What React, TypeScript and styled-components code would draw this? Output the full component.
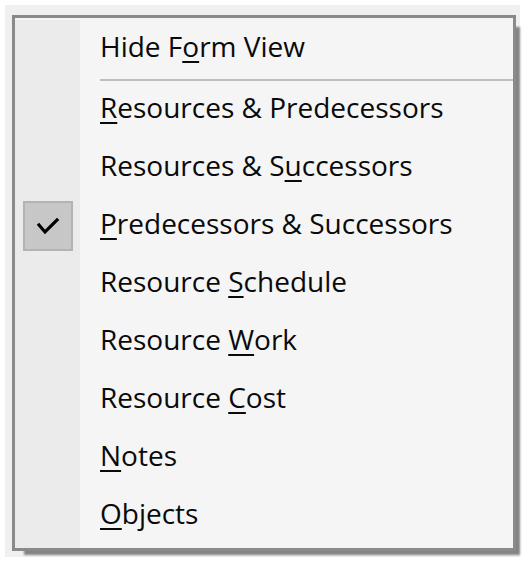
import React from "react";
import styled, { createGlobalStyle } from "styled-components";

const Global = createGlobalStyle`
  html, body { margin: 0; padding: 0; background: #ffffff; }
  body { font-family: "Open Sans", "Noto Sans", sans-serif; }
`;

const Frame = styled.div`
  margin: 5px 0 0 5px;
  width: 515px;
  height: 552px;
  background: #f0f0f0;
  padding: 10px 0 0 7px;
  box-sizing: border-box;
`;

const Menu = styled.div`
  width: 504px;
  height: 536px;
  box-sizing: border-box;
  border: 3px solid #8a8a8a;
  background: #f5f5f5;
  padding-top: 2px;
  box-shadow: 8px 8px 2px -4px rgba(0, 0, 0, 0.45);
  display: flex;
  flex-direction: column;
`;

const Row = styled.div`
  display: grid;
  grid-template-columns: 65px 1fr;
  height: 58px;
`;

const Gutter = styled.div`
  background: #ebebeb;
  display: flex;
  align-items: center;
  justify-content: flex-start;
  padding-left: 8px;
`;

const GutterFill = styled.div`
  flex: 1;
  width: 65px;
  background: #ebebeb;
`;

const Label = styled.span`
  padding-left: 20px;
  font-family: "Open Sans", "Noto Sans", sans-serif;
  font-size: 28px;
  line-height: 52px;
  padding-bottom: 6px;
  color: #0a0a0a;
  white-space: nowrap;
`;

const Key = styled.span`
  text-decoration: underline;
  text-decoration-thickness: 2px;
  text-underline-offset: 4px;
`;

const SeparatorRow = styled.div`
  display: grid;
  grid-template-columns: 65px 1fr;
  height: 3px;
`;

const SeparatorLine = styled.div`
  margin-left: 20px;
  margin-top: 1px;
  height: 2px;
  background: #bdbdbd;
`;

const CheckBox = styled.div`
  width: 50px;
  height: 50px;
  box-sizing: border-box;
  border: 2px solid #b3b3b3;
  background: #c7c7c7;
  display: flex;
  align-items: center;
  justify-content: center;
`;

type Item = { pre: string; key: string; post: string; checked?: boolean };

const items: Item[] = [
  { pre: "", key: "R", post: "esources & Predecessors" },
  { pre: "Resources & S", key: "u", post: "ccessors" },
  { pre: "", key: "P", post: "redecessors & Successors", checked: true },
  { pre: "Resource ", key: "S", post: "chedule" },
  { pre: "Resource ", key: "W", post: "ork" },
  { pre: "Resource ", key: "C", post: "ost" },
  { pre: "", key: "N", post: "otes" },
  { pre: "", key: "O", post: "bjects" },
];

const Check = () => (
  <svg width="24" height="20" viewBox="0 0 24 20">
    <polyline
      points="3,9 9,16 21,4"
      fill="none"
      stroke="#000"
      strokeWidth="3.2"
      strokeLinecap="square"
    />
  </svg>
);

const MenuItem = ({ item }: { item: Item }) => (
  <Row>
    <Gutter>
      {item.checked && (
        <CheckBox>
          <Check />
        </CheckBox>
      )}
    </Gutter>
    <Label>
      {item.pre}
      <Key>{item.key}</Key>
      {item.post}
    </Label>
  </Row>
);

export default function App() {
  return (
    <>
      <Global />
      <Frame>
        <Menu>
          <MenuItem item={{ pre: "Hide F", key: "o", post: "rm View" }} />
          <SeparatorRow>
            <Gutter />
            <SeparatorLine />
          </SeparatorRow>
          {items.map((it) => (
            <MenuItem key={it.pre + it.key + it.post} item={it} />
          ))}
          <GutterFill />
        </Menu>
      </Frame>
    </>
  );
}
